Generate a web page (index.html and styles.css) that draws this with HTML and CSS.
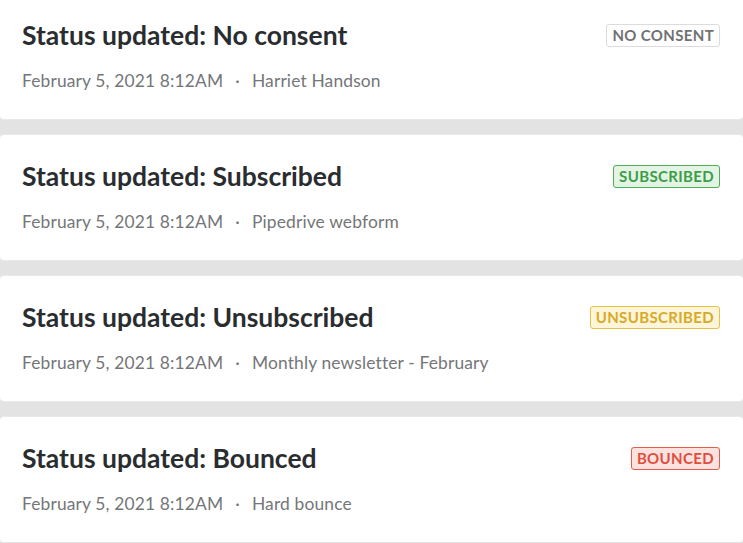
FILE: index.html
```html
<!DOCTYPE html>
<html lang="en">
<head>
<meta charset="utf-8">
<title>Status updates</title>
<link rel="stylesheet" href="styles.css">
</head>
<body>
<div class="list">
  <div class="card">
    <div class="head">
      <h2 class="title">Status updated: No consent</h2>
      <span class="badge badge-none">NO CONSENT</span>
    </div>
    <div class="meta"><span>February 5, 2021 8:12AM</span><span class="sep">·</span><span>Harriet Handson</span></div>
  </div>
  <div class="card">
    <div class="head">
      <h2 class="title">Status updated: Subscribed</h2>
      <span class="badge badge-sub">SUBSCRIBED</span>
    </div>
    <div class="meta"><span>February 5, 2021 8:12AM</span><span class="sep">·</span><span>Pipedrive webform</span></div>
  </div>
  <div class="card">
    <div class="head">
      <h2 class="title">Status updated: Unsubscribed</h2>
      <span class="badge badge-unsub">UNSUBSCRIBED</span>
    </div>
    <div class="meta"><span>February 5, 2021 8:12AM</span><span class="sep">·</span><span>Monthly newsletter - February</span></div>
  </div>
  <div class="card">
    <div class="head">
      <h2 class="title">Status updated: Bounced</h2>
      <span class="badge badge-bounce">BOUNCED</span>
    </div>
    <div class="meta"><span>February 5, 2021 8:12AM</span><span class="sep">·</span><span>Hard bounce</span></div>
  </div>
</div>
</body>
</html>
```

FILE: styles.css
```css
html, body {
  margin: 0;
  padding: 0;
  background: #e3e3e3;
  font-family: Lato, "Noto Sans", sans-serif;
  overflow: hidden;
}

.list {
  display: flex;
  flex-direction: column;
  gap: 16px;
  margin-top: -6px;
}

.card {
  background: #ffffff;
  height: 125px;
  box-sizing: border-box;
  padding: 24px 23px 0 22px;
  border-radius: 4px;
  box-shadow: 0 0 0 1px #e9e9e9;
}

.head {
  display: flex;
  justify-content: space-between;
  align-items: center;
  height: 34px;
}

.title {
  margin: 0;
  font-size: 26.5px;
  line-height: 34px;
  font-weight: 700;
  color: #2a2d30;
}

.meta {
  margin-top: 17px;
  font-size: 17.4px;
  line-height: 24px;
  letter-spacing: 0.15px;
  color: #747678;
  display: flex;
  align-items: center;
}

.sep {
  margin: 0 12px;
}

.badge {
  display: inline-flex;
  align-items: center;
  box-sizing: border-box;
  height: 23px;
  padding: 0 5px;
  border: 1.5px solid;
  border-radius: 3px;
  font-size: 15px;
  font-weight: 700;
  letter-spacing: 0.35px;
}

.badge-none {
  border-color: #dcdcdc;
  color: #6f7173;
  background: #ffffff;
}

.badge-sub {
  border-color: #4cae55;
  color: #3d9e48;
  background: #e3f4e5;
}

.badge-unsub {
  border-color: #e6c345;
  color: #d6aa28;
  background: #fdf5d9;
}

.badge-bounce {
  border-color: #e85a4c;
  color: #e04d3f;
  background: #fce2df;
}
```
